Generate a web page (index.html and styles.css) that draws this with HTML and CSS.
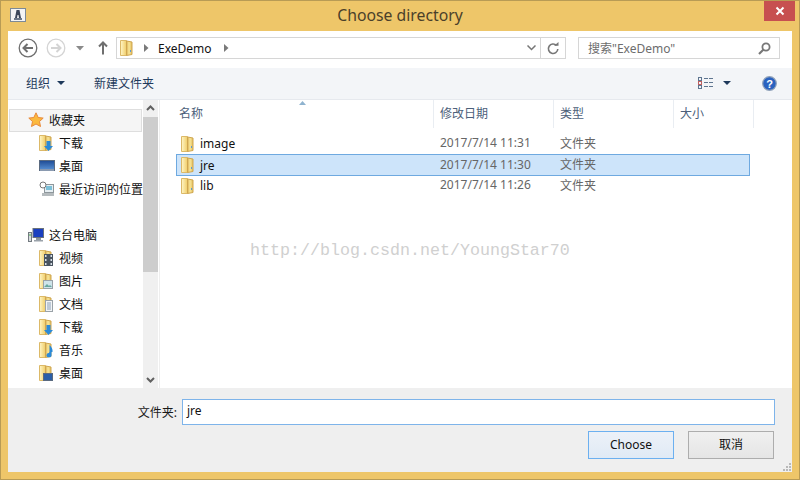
FILE: index.html
```html
<!DOCTYPE html>
<html lang="zh">
<head>
<meta charset="utf-8">
<title>Choose directory</title>
<link rel="stylesheet" href="styles.css">
</head>
<body>
<svg class="defs" width="0" height="0">
  <defs>
    <linearGradient id="fg" x1="0" y1="0" x2="1" y2="0">
      <stop offset="0" stop-color="#fff6c8"/><stop offset="1" stop-color="#f0cd68"/>
    </linearGradient>
    <linearGradient id="fr" x1="0" y1="0" x2="1" y2="0">
      <stop offset="0" stop-color="#d9ae50"/><stop offset=".45" stop-color="#f9e79a"/><stop offset="1" stop-color="#e3bd5c"/>
    </linearGradient>
    <linearGradient id="dk" x1="0" y1="0" x2="0" y2="1">
      <stop offset="0" stop-color="#1d4a94"/><stop offset="1" stop-color="#5c95d8"/>
    </linearGradient>
    <symbol id="folder" viewBox="1 0 16 16">
      <path d="M1.500 .5h6v15h-6z" fill="url(#fg)" stroke="#dcb968"/>
      <path d="M7.500 1l5.500 1v12.500l-5.500 1z" fill="url(#fr)" stroke="#cfa650"/>
      <rect x="11" y="10" width="1" height="2" fill="#5b9bd5"/>
    </symbol>
  </defs>
</svg>
<div class="window">
  <header class="titlebar">
    <span class="appicon"><svg width="14" height="12" viewBox="0 0 14 12"><path d="M5.500 1h3l1.500 8h-2l-.5-3h-1l-.5 3h-2z" fill="#3c4658"/><rect x="3" y="9" width="8" height="2" fill="#6b7686"/></svg></span>
    <h1 class="title">Choose directory</h1>
    <button class="close" aria-label="close"><svg width="10" height="10" viewBox="0 0 10 10"><path d="M1.500 1.500l7 7M8.500 1.500l-7 7" stroke="#fff" stroke-width="2"/></svg></button>
  </header>
  <main class="client">
    <div class="navbar">
      <svg class="nav-back" width="20" height="20" viewBox="0 0 20 20"><circle cx="10" cy="10" r="8.800" fill="#fff" stroke="#6f6f6f" stroke-width="1.300"/><path d="M15 10H6M9.500 6L5.500 10l4 4" fill="none" stroke="#6f6f6f" stroke-width="2"/></svg>
      <svg class="nav-fwd" width="20" height="20" viewBox="0 0 20 20"><circle cx="10" cy="10" r="8.800" fill="#fff" stroke="#d4d4d4" stroke-width="1.300"/><path d="M5 10h9M10.500 6l4 4-4 4" fill="none" stroke="#d4d4d4" stroke-width="2"/></svg>
      <svg class="nav-drop" width="8" height="5" viewBox="0 0 8 5"><path d="M0 0h8L4 4.500z" fill="#8a8a8a"/></svg>
      <svg class="nav-up" width="10" height="14" viewBox="0 0 10 14"><path d="M5 13.500V2M1 5.500L5 1.500l4 4" fill="none" stroke="#6f6f6f" stroke-width="2"/></svg>
      <div class="address">
        <svg class="ico" width="16" height="16"><use href="#folder"/></svg>
        <svg class="crumb first" width="5" height="8" viewBox="0 0 5 8"><path d="M0 0l4.500 4L0 8z" fill="#7a7a7a"/></svg>
        <span class="crumb-text">ExeDemo</span>
        <svg class="crumb" width="5" height="8" viewBox="0 0 5 8"><path d="M0 0l4.500 4L0 8z" fill="#7a7a7a"/></svg>
        <span class="spacer"></span>
        <svg class="addr-drop" width="9" height="6" viewBox="0 0 9 6"><path d="M.5 .5L4.500 4.500 8.500 .5" fill="none" stroke="#777" stroke-width="1.500"/></svg>
        <span class="refresh"><svg width="12" height="13" viewBox="0 0 12 13"><path d="M9.500 3.500a4.700 4.700 0 1 0 1.300 3.500" fill="none" stroke="#777" stroke-width="1.600"/><path d="M7 3.800h4.500V0z" fill="#777"/></svg></span>
      </div>
      <div class="search">
        <span class="search-text">搜索"ExeDemo"</span>
        <svg width="13" height="13" viewBox="0 0 13 13"><circle cx="8" cy="5" r="3.600" fill="none" stroke="#777" stroke-width="1.800"/><path d="M5.500 7.500L1 12" stroke="#777" stroke-width="2.200"/></svg>
      </div>
    </div>
    <div class="cmdbar">
      <span class="cmd">组织</span>
      <svg class="cmd-caret" width="8" height="4" viewBox="0 0 8 4"><path d="M0 0h8L4 4z" fill="#1e395b"/></svg>
      <span class="cmd cmd-new">新建文件夹</span>
      <span class="spacer"></span>
      <svg class="view" width="16" height="12" viewBox="0 0 16 12"><g fill="none" stroke="#5e7590"><rect x=".5" y=".5" width="3" height="3"/><rect x=".5" y="4.500" width="3" height="3" stroke="#c06060"/><rect x=".5" y="8.500" width="3" height="3"/><path d="M6 1.500h4M11 1.500h4M6 5.500h4M11 5.500h4M6 9.500h4M11 9.500h4"/></g></svg>
      <svg class="view-caret" width="8" height="4" viewBox="0 0 8 4"><path d="M0 0h8L4 4z" fill="#1e395b"/></svg>
      <svg class="help" width="15" height="15" viewBox="0 0 15 15"><circle cx="7.500" cy="7.500" r="6.800" fill="#2a62c0" stroke="#8ea0b8" stroke-width="1.200"/><text x="7.500" y="11.500" text-anchor="middle" class="help-q">?</text></svg>
    </div>
    <div class="panes">
      <nav class="tree">
        <div class="tree-row tree-top tree-hover">
          <svg class="ico" width="16" height="16" viewBox="0 0 16 16"><path d="M8 .8l2.200 4.700 5 .6-3.700 3.400 1 5L8 12l-4.500 2.500 1-5L.8 6.100l5-.6z" fill="#fbb93e" stroke="#e8893a"/></svg>
          <span>收藏夹</span>
        </div>
        <div class="tree-row tree-sub">
          <span class="iconwrap"><svg class="ico" width="16" height="16"><use href="#folder"/></svg><svg class="badge" width="9" height="10" viewBox="0 0 9 10"><path d="M2.500 0h4v5H9L4.500 10 0 5h2.500z" fill="#2a8ad8"/></svg></span>
          <span>下载</span>
        </div>
        <div class="tree-row tree-sub">
          <svg class="ico" width="16" height="14" viewBox="0 0 16 14"><rect x=".5" y="1.500" width="15" height="10" fill="url(#dk)" stroke="#5a6a80"/><rect x="1" y="10" width="14" height="2" fill="#8a9ab0"/></svg>
          <span>桌面</span>
        </div>
        <div class="tree-row tree-sub">
          <svg class="ico" width="16" height="16" viewBox="0 0 16 16"><rect x="5.500" y="3.500" width="9" height="8" fill="#e6eef2" stroke="#8e979c"/><rect x="7" y="5" width="6" height="4" fill="#7cc0d8"/><rect x="3" y="12" width="12" height="3" fill="#b5bbbe"/><circle cx="4" cy="4" r="3" fill="#fff" stroke="#777"/></svg>
          <span>最近访问的位置</span>
        </div>
        <div class="tree-gap"></div>
        <div class="tree-row tree-top">
          <svg class="ico" width="16" height="16" viewBox="0 0 16 16"><rect x="5" y="1.500" width="10.500" height="9" fill="#1a3fc0" stroke="#68717c"/><rect x="8" y="11" width="5" height="2" fill="#8c959e"/><rect x="6" y="13" width="9" height="1.500" fill="#9aa2aa"/><rect x=".5" y="5.500" width="3" height="9" fill="#d8dcdf" stroke="#737a80"/><rect x="1.500" y="7" width="1" height="2" fill="#4ab04a"/></svg>
          <span>这台电脑</span>
        </div>
        <div class="tree-row tree-sub">
          <span class="iconwrap"><svg class="ico" width="16" height="16"><use href="#folder"/></svg><svg class="badge" width="9" height="12" viewBox="0 0 9 12"><rect width="9" height="12" fill="#4a5560"/><path d="M1 1h1.500v2H1zM1 5h1.500v2H1zM1 9h1.500v2H1zM6.500 1H8v2H6.500zM6.500 5H8v2H6.500zM6.500 9H8v2H6.500z" fill="#d8e0e8"/></svg></span>
          <span>视频</span>
        </div>
        <div class="tree-row tree-sub">
          <span class="iconwrap"><svg class="ico" width="16" height="16"><use href="#folder"/></svg><svg class="badge" width="10" height="9" viewBox="0 0 10 9"><rect x=".5" y=".5" width="9" height="8" fill="#cfe4ea" stroke="#9aa2a8"/><path d="M1 7l3-3 2 2 1-1 2 2z" fill="#6aa8a0"/></svg></span>
          <span>图片</span>
        </div>
        <div class="tree-row tree-sub">
          <span class="iconwrap"><svg class="ico" width="16" height="16"><use href="#folder"/></svg><svg class="badge" width="8" height="12" viewBox="0 0 8 12"><rect x=".5" y=".5" width="7" height="11" fill="#f2f4f6" stroke="#9aa2a8"/><path d="M2 3h4M2 5h4M2 7h4M2 9h4" stroke="#8aa0b8"/></svg></span>
          <span>文档</span>
        </div>
        <div class="tree-row tree-sub">
          <span class="iconwrap"><svg class="ico" width="16" height="16"><use href="#folder"/></svg><svg class="badge" width="9" height="10" viewBox="0 0 9 10"><path d="M2.500 0h4v5H9L4.500 10 0 5h2.500z" fill="#2a8ad8"/></svg></span>
          <span>下载</span>
        </div>
        <div class="tree-row tree-sub">
          <span class="iconwrap"><svg class="ico" width="16" height="16"><use href="#folder"/></svg><svg class="badge" width="8" height="13" viewBox="0 0 8 13"><path d="M4.500 0c2 2 3.500 4 3 7H6.500V1.500v8.500a2.500 2.200 0 1 1-2-2z" fill="#2a8ad8"/></svg></span>
          <span>音乐</span>
        </div>
        <div class="tree-row tree-sub">
          <span class="iconwrap"><svg class="ico" width="16" height="16"><use href="#folder"/></svg><svg class="badge" width="10" height="8" viewBox="0 0 10 8"><rect x=".5" y=".5" width="9" height="7" fill="#2b5fa8" stroke="#5a6a80"/></svg></span>
          <span>桌面</span>
        </div>
      </nav>
      <div class="scrollbar">
        <svg class="arrow" width="9" height="6" viewBox="0 0 9 6"><path d="M1 5l3.500-3.500L8 5" fill="none" stroke="#606060" stroke-width="2"/></svg>
        <div class="thumb"></div>
        <span class="spacer"></span>
        <svg class="arrow arrow-down" width="9" height="6" viewBox="0 0 9 6"><path d="M1 1l3.500 3.500L8 1" fill="none" stroke="#606060" stroke-width="2"/></svg>
      </div>
      <section class="files">
        <div class="cols">
          <div class="col col-name">名称<svg class="sort" width="7" height="4" viewBox="0 0 7 4"><path d="M3.500 0L7 4H0z" fill="#8fb3cf"/></svg></div>
          <div class="col col-date">修改日期</div>
          <div class="col col-type">类型</div>
          <div class="col col-size">大小</div>
        </div>
        <div class="rows">
          <div class="row"><span class="cell-name"><svg class="ico" width="16" height="16"><use href="#folder"/></svg>image</span><span class="cell-date">2017/7/14 11:31</span><span class="cell-type">文件夹</span></div>
          <div class="row selected"><span class="cell-name"><svg class="ico" width="16" height="16"><use href="#folder"/></svg>jre</span><span class="cell-date">2017/7/14 11:30</span><span class="cell-type">文件夹</span></div>
          <div class="row"><span class="cell-name"><svg class="ico" width="16" height="16"><use href="#folder"/></svg>lib</span><span class="cell-date">2017/7/14 11:26</span><span class="cell-type">文件夹</span></div>
        </div>
      </section>
    </div>
    <footer class="footer">
      <div class="name-row">
        <label class="name-label">文件夹:</label>
        <div class="name-input">jre</div>
      </div>
      <div class="btn-row">
        <button class="btn btn-default">Choose</button>
        <button class="btn">取消</button>
      </div>
    </footer>
  </main>
  <div class="watermark">http://blog.csdn.net/YoungStar70</div>
  <svg class="grip" width="9" height="9" viewBox="0 0 9 9"><path d="M6 0h2v2H6zM3 3h2v2H3zM6 3h2v2H6zM0 6h2v2H0zM3 6h2v2H3zM6 6h2v2H6z" fill="#b8b8b8"/></svg>
</div>
</body>
</html>
```
FILE: styles.css
```css
* { box-sizing: border-box; }
html, body { margin: 0; padding: 0; }
body {
  width: 800px;
  height: 480px;
  overflow: hidden;
  font: 12px "Noto Sans", "Noto Sans CJK SC", sans-serif;
  color: #1a1a1a;
}
.defs { position: absolute; }
.window {
  position: relative;
  width: 800px;
  height: 480px;
  display: flex;
  flex-direction: column;
  background: #eec669;
  border: 1px solid #b89b55;
  padding: 0 7px 7px;
}
.titlebar {
  flex: none;
  height: 30px;
  display: flex;
  align-items: center;
  position: relative;
}
.appicon {
  position: absolute;
  left: 2px;
  top: 7px;
  width: 16px;
  height: 14px;
  display: flex;
  align-items: center;
  justify-content: center;
  background: #f4f4f4;
  border: 1px solid #7d8a96;
}
.title {
  flex: 1;
  margin: 0;
  text-align: center;
  font-size: 15.75px;
  font-weight: 400;
  line-height: 28px;
  padding-bottom: 2px;
  color: #4a3f2a;
}
.close {
  position: absolute;
  right: -3px;
  top: 0;
  width: 31px;
  height: 20px;
  padding: 0;
  border: 0;
  background: #c75050;
  display: flex;
  align-items: center;
  justify-content: center;
}
.client {
  flex: 1;
  min-height: 0;
  display: flex;
  flex-direction: column;
  background: #fff;
}
.navbar {
  flex: none;
  height: 37px;
  display: flex;
  align-items: center;
  padding-bottom: 3px;
}
.nav-back { margin-left: 10px; }
.nav-fwd { margin-left: 8px; }
.nav-drop { margin-left: 10px; }
.nav-up { margin-left: 14px; }
.address {
  margin-left: 8px;
  width: 450px;
  height: 22px;
  display: flex;
  align-items: center;
  border: 1px solid #d6d6d6;
  padding-left: 3px;
}
.ico { flex: none; display: block; }
.crumb { flex: none; }
.crumb.first { margin-left: 8px; }
.crumb-text { margin: 0 12px 0 9px; color: #111; }
.spacer { flex: 1; }
.addr-drop { margin-right: 4px; }
.refresh {
  width: 25px;
  height: 20px;
  border-left: 1px solid #d6d6d6;
  display: flex;
  align-items: center;
  justify-content: center;
}
.search {
  margin-left: 12px;
  width: 202px;
  height: 22px;
  display: flex;
  align-items: center;
  justify-content: space-between;
  border: 1px solid #d6d6d6;
  padding: 0 8px 0 9px;
  color: #6d6d6d;
}
.cmdbar {
  flex: none;
  height: 32px;
  display: flex;
  align-items: center;
  background: #f3f5f8;
  border-bottom: 1px solid #e6e9ee;
  padding: 0 0 1px 18px;
  color: #1e395b;
}
.cmd { color: #1e395b; }
.cmd-caret { margin-left: 7px; }
.cmd-new { margin-left: 29px; }
.view-caret { margin-left: 9px; margin-right: 31px; }
.help { margin-right: 15px; }
.help-q { font: 700 11px "Liberation Sans", sans-serif; fill: #fff; }
.panes {
  flex: 1;
  min-height: 0;
  display: flex;
}
.tree {
  flex: none;
  width: 135px;
  overflow: hidden;
  padding-top: 9px;
  white-space: nowrap;
}
.tree-row {
  height: 23px;
  display: flex;
  align-items: center;
  gap: 4px;
  padding-bottom: 2px;
  color: #111;
}
.tree-top { padding-left: 20px; gap: 5px; }
.tree-sub { padding-left: 31px; }
.tree-hover {
  margin-left: 1px;
  margin-right: 1px;
  padding-left: 18px;
  background: #f5f5f5;
  border: 1px solid #dedede;
}
.tree-gap { height: 23px; }
.iconwrap { position: relative; flex: none; width: 16px; height: 16px; }
.badge { position: absolute; right: 2px; bottom: 0; }
.scrollbar {
  flex: none;
  width: 15px;
  background: #f0f0f0;
  display: flex;
  flex-direction: column;
  align-items: center;
}
.arrow { flex: none; margin: 5px 0 6px; }
.arrow-down { margin: 0 0 5px; }
.thumb { flex: none; width: 15px; height: 155px; background: #cdcdcd; }
.files {
  flex: 1;
  min-width: 0;
  border-left: 1px solid #eeeeee;
  margin-left: 1px;
  padding-left: 13px;
  display: flex;
  flex-direction: column;
}
.cols {
  flex: none;
  height: 28px;
  display: flex;
  color: #4c607a;
}
.col {
  position: relative;
  height: 28px;
  padding: 4px 0 0 6px;
  border-right: 1px solid #e9edf2;
}
.col-name { width: 261px; }
.col-date { width: 120px; }
.col-type { width: 120px; }
.col-size { width: 80px; }
.sort { position: absolute; left: 126px; top: 1px; }
.rows { padding: 5px 0 0 3px; }
.row {
  width: 574px;
  height: 21px;
  display: flex;
  align-items: center;
  color: #666;
  border: 1px solid transparent;
}
.selected {
  height: 22px;
  margin-bottom: -1px;
  background: #cde4fa;
  border-color: #6ea9e0;
}
.cell-name {
  width: 263px;
  padding-left: 4px;
  display: flex;
  align-items: center;
  gap: 3px;
  color: #111;
}
.cell-date { width: 120px; padding-bottom: 2px; color: #666; }
.cell-type { padding-bottom: 2px; color: #666; }
.footer {
  flex: none;
  height: 84px;
  background: #efefef;
  padding: 11px 17px 0 0;
  display: flex;
  flex-direction: column;
}
.name-row {
  display: flex;
  align-items: center;
  justify-content: flex-end;
  height: 26px;
}
.name-label { margin-right: 5px; }
.name-input {
  width: 593px;
  height: 26px;
  background: #fff;
  border: 1px solid #7eb4ea;
  padding: 0 4px;
  line-height: 22px;
  color: #111;
}
.btn-row {
  margin-top: 6px;
  display: flex;
  justify-content: flex-end;
  gap: 14px;
  padding-right: 1px;
}
.btn {
  width: 86px;
  height: 28px;
  padding: 0 0 2px;
  font: inherit;
  color: #111;
  background: linear-gradient(#f0f0f0, #e5e5e5);
  border: 1px solid #adadad;
}
.btn-default {
  background: linear-gradient(#ecf1f8, #e0eaf5);
  border-color: #6cb0f0;
}
.watermark {
  position: absolute;
  left: 249px;
  top: 240px;
  font: 16.67px/20px "Liberation Mono", monospace;
  color: #d0d0d0;
  white-space: nowrap;
}
.grip { position: absolute; right: 7px; bottom: 7px; }
```
